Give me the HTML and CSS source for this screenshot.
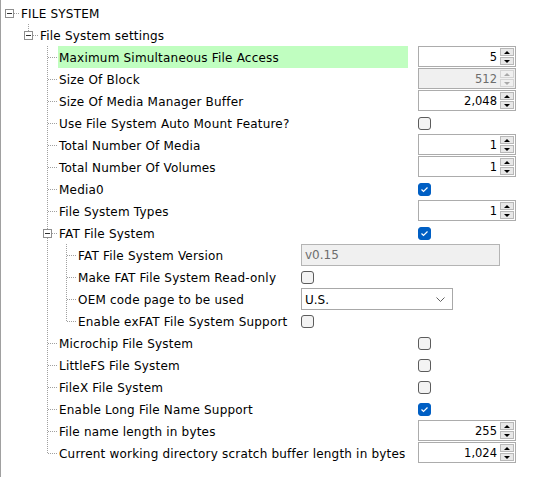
FILE: index.html
```html
<!DOCTYPE html>
<html>
<head>
<meta charset="utf-8">
<link rel="stylesheet" href="styles.css">
</head>
<body>
<div class="tree">
  <div class="row">
    <span class="node exp root"><i class="box"></i></span>
    <span class="lbl">FILE SYSTEM</span>
  </div>
  <div class="row">
    <span class="ind"></span>
    <span class="node exp top"><i class="box"></i></span>
    <span class="lbl">File System settings</span>
  </div>
  <div class="row">
    <span class="ind"></span><span class="ind"></span>
    <span class="node mid"></span>
    <span class="lbl fill sel">Maximum Simultaneous File Access</span>
    <span class="ctl"><span class="spin"><span class="val">5</span><span class="btns"><b class="up"></b><b class="down"></b></span></span></span>
  </div>
  <div class="row">
    <span class="ind"></span><span class="ind"></span>
    <span class="node mid"></span>
    <span class="lbl fill">Size Of Block</span>
    <span class="ctl"><span class="spin dis"><span class="val">512</span><span class="btns"><b class="up"></b><b class="down"></b></span></span></span>
  </div>
  <div class="row">
    <span class="ind"></span><span class="ind"></span>
    <span class="node mid"></span>
    <span class="lbl fill">Size Of Media Manager Buffer</span>
    <span class="ctl"><span class="spin"><span class="val">2,048</span><span class="btns"><b class="up"></b><b class="down"></b></span></span></span>
  </div>
  <div class="row">
    <span class="ind"></span><span class="ind"></span>
    <span class="node mid"></span>
    <span class="lbl fill">Use File System Auto Mount Feature?</span>
    <span class="ctl"><span class="cb"></span></span>
  </div>
  <div class="row">
    <span class="ind"></span><span class="ind"></span>
    <span class="node mid"></span>
    <span class="lbl fill">Total Number Of Media</span>
    <span class="ctl"><span class="spin"><span class="val">1</span><span class="btns"><b class="up"></b><b class="down"></b></span></span></span>
  </div>
  <div class="row">
    <span class="ind"></span><span class="ind"></span>
    <span class="node mid"></span>
    <span class="lbl fill">Total Number Of Volumes</span>
    <span class="ctl"><span class="spin"><span class="val">1</span><span class="btns"><b class="up"></b><b class="down"></b></span></span></span>
  </div>
  <div class="row">
    <span class="ind"></span><span class="ind"></span>
    <span class="node mid"></span>
    <span class="lbl fill">Media0</span>
    <span class="ctl"><span class="cb on"><svg width="11" height="11" viewBox="0 0 11 11"><path d="M2.5 5.5 L4.5 7.5 L8.5 3.5" fill="none" stroke="#fff" stroke-width="1.2"/></svg></span></span>
  </div>
  <div class="row">
    <span class="ind"></span><span class="ind"></span>
    <span class="node mid"></span>
    <span class="lbl fill">File System Types</span>
    <span class="ctl"><span class="spin"><span class="val">1</span><span class="btns"><b class="up"></b><b class="down"></b></span></span></span>
  </div>
  <div class="row">
    <span class="ind"></span><span class="ind"></span>
    <span class="node exp mid"><i class="box"></i></span>
    <span class="lbl fill">FAT File System</span>
    <span class="ctl"><span class="cb on"><svg width="11" height="11" viewBox="0 0 11 11"><path d="M2.5 5.5 L4.5 7.5 L8.5 3.5" fill="none" stroke="#fff" stroke-width="1.2"/></svg></span></span>
  </div>
  <div class="row">
    <span class="ind"></span><span class="ind"></span><span class="ind pass"></span>
    <span class="node mid"></span>
    <span class="lbl fill">FAT File System Version</span>
    <span class="ctl w"><span class="field">v0.15</span></span>
  </div>
  <div class="row">
    <span class="ind"></span><span class="ind"></span><span class="ind pass"></span>
    <span class="node mid"></span>
    <span class="lbl fill">Make FAT File System Read-only</span>
    <span class="ctl w"><span class="cb"></span></span>
  </div>
  <div class="row">
    <span class="ind"></span><span class="ind"></span><span class="ind pass"></span>
    <span class="node mid"></span>
    <span class="lbl fill">OEM code page to be used</span>
    <span class="ctl w"><span class="combo"><span class="ctext">U.S.</span><svg width="9" height="6" viewBox="0 0 9 6"><path d="M0.5 0.5 L4.5 4.5 L8.5 0.5" fill="none" stroke="#606060" stroke-width="1"/></svg></span></span>
  </div>
  <div class="row">
    <span class="ind"></span><span class="ind"></span><span class="ind pass"></span>
    <span class="node last"></span>
    <span class="lbl fill">Enable exFAT File System Support</span>
    <span class="ctl w"><span class="cb"></span></span>
  </div>
  <div class="row">
    <span class="ind"></span><span class="ind"></span>
    <span class="node mid"></span>
    <span class="lbl fill">Microchip File System</span>
    <span class="ctl"><span class="cb"></span></span>
  </div>
  <div class="row">
    <span class="ind"></span><span class="ind"></span>
    <span class="node mid"></span>
    <span class="lbl fill">LittleFS File System</span>
    <span class="ctl"><span class="cb"></span></span>
  </div>
  <div class="row">
    <span class="ind"></span><span class="ind"></span>
    <span class="node mid"></span>
    <span class="lbl fill">FileX File System</span>
    <span class="ctl"><span class="cb"></span></span>
  </div>
  <div class="row">
    <span class="ind"></span><span class="ind"></span>
    <span class="node mid"></span>
    <span class="lbl fill">Enable Long File Name Support</span>
    <span class="ctl"><span class="cb on"><svg width="11" height="11" viewBox="0 0 11 11"><path d="M2.5 5.5 L4.5 7.5 L8.5 3.5" fill="none" stroke="#fff" stroke-width="1.2"/></svg></span></span>
  </div>
  <div class="row">
    <span class="ind"></span><span class="ind"></span>
    <span class="node mid"></span>
    <span class="lbl fill">File name length in bytes</span>
    <span class="ctl"><span class="spin"><span class="val">255</span><span class="btns"><b class="up"></b><b class="down"></b></span></span></span>
  </div>
  <div class="row">
    <span class="ind"></span><span class="ind"></span>
    <span class="node last"></span>
    <span class="lbl fill">Current working directory scratch buffer length in bytes</span>
    <span class="ctl"><span class="spin"><span class="val">1,024</span><span class="btns"><b class="up"></b><b class="down"></b></span></span></span>
  </div>
</div>
</body>
</html>
```

FILE: styles.css
```css
* { box-sizing: border-box; }
html, body { margin: 0; padding: 0; background: #fff; }
body {
  font-family: "DejaVu Sans", sans-serif;
  font-size: 12px;
  color: #000;
}
.tree {
  width: 543px;
  height: 477px;
  border-left: 1px solid #a0a0a0;
  padding-top: 2px;
  overflow: hidden;
}
.row {
  display: flex;
  height: 22px;
}
.ind { flex: 0 0 19px; }
.ind.pass, .node.mid {
  background-image: repeating-linear-gradient(to bottom, #a0a0a0 0 1px, transparent 1px 2px);
  background-size: 1px 100%;
  background-position: 8px 0;
  background-repeat: no-repeat;
}
.node {
  flex: 0 0 19px;
  display: flex;
  align-items: flex-start;
}
.node.mid, .node.last {
  background-image:
    repeating-linear-gradient(to bottom, #a0a0a0 0 1px, transparent 1px 2px),
    repeating-linear-gradient(to right, #a0a0a0 0 1px, transparent 1px 2px);
  background-repeat: no-repeat;
  background-size: 1px 100%, 10px 1px;
  background-position: 8px 0, 9px 11px;
}
.node.last { background-size: 1px 12px, 10px 1px; }
.node.exp.root {
  background-image: repeating-linear-gradient(to right, #a0a0a0 0 1px, transparent 1px 2px);
  background-repeat: no-repeat;
  background-size: 6px 1px;
  background-position: 13px 11px;
}
.node.exp.top {
  background-image:
    repeating-linear-gradient(to bottom, #a0a0a0 0 1px, transparent 1px 2px),
    repeating-linear-gradient(to right, #a0a0a0 0 1px, transparent 1px 2px);
  background-repeat: no-repeat;
  background-size: 1px 7px, 6px 1px;
  background-position: 8px 0, 13px 11px;
}
.node.exp.mid {
  background-size: 1px 100%, 6px 1px;
  background-position: 8px 0, 13px 11px;
}
.box {
  width: 9px;
  height: 9px;
  margin: 7px 0 0 4px;
  border: 1px solid #8e8e8e;
  background: linear-gradient(#303030, #303030) center / 5px 1px no-repeat, #fff;
}
.lbl {
  padding-left: 1px;
  line-height: 24px;
  height: 22px;
  overflow: hidden;
  white-space: nowrap;
  letter-spacing: 0.2px;
}
.lbl.fill {
  flex: 1;
  margin-right: 10px;
}
.lbl.sel { background: #c0fec0; }
.ctl {
  flex: 0 0 125px;
  display: flex;
  align-items: flex-start;
}
.ctl.w { flex-basis: 242px; }
.spin {
  width: 98px;
  height: 21px;
  border: 1px solid #acacac;
  background: #fff;
  display: flex;
}
.val {
  flex: 1;
  text-align: right;
  padding-right: 3px;
  line-height: 20px;
  font-size: 11.5px;
}
.btns {
  flex: 0 0 15px;
  display: flex;
  flex-direction: column;
  gap: 1px;
  padding: 1px 1px 1px 0;
}
.btns b {
  flex: 1;
  border: 1px solid #b8b8b8;
  background: #e8e8e8;
  display: flex;
  align-items: center;
  justify-content: center;
}
.up::after {
  content: "";
  border-left: 3px solid transparent;
  border-right: 3px solid transparent;
  border-bottom: 3px solid #000;
}
.down::after {
  content: "";
  border-left: 3px solid transparent;
  border-right: 3px solid transparent;
  border-top: 3px solid #000;
}
.spin.dis { background: #f0f0f0; }
.spin.dis .val { color: #6d6d6d; }
.spin.dis .btns b { background: #f0f0f0; border-color: #d4d4d4; }
.spin.dis .up::after { border-bottom-color: #a8a8a8; }
.spin.dis .down::after { border-top-color: #a8a8a8; }
.cb {
  width: 13px;
  height: 13px;
  margin-top: 5px;
  border: 1px solid #5c5c5c;
  border-radius: 3px;
  background: #f3f3f3;
  display: flex;
  align-items: center;
  justify-content: center;
}
.cb.on {
  background: #005fc4;
  border-color: #005fc4;
}
.field {
  width: 199px;
  height: 22px;
  border: 1px solid #b4b4b4;
  background: #f0f0f0;
  color: #6d6d6d;
  padding-left: 3px;
  line-height: 21px;
}
.combo {
  width: 152px;
  height: 22px;
  border: 1px solid #a8a8a8;
  background: #fff;
  display: flex;
  align-items: center;
  padding: 1px 7px 0 3px;
}
.ctext { flex: 1; }
```
